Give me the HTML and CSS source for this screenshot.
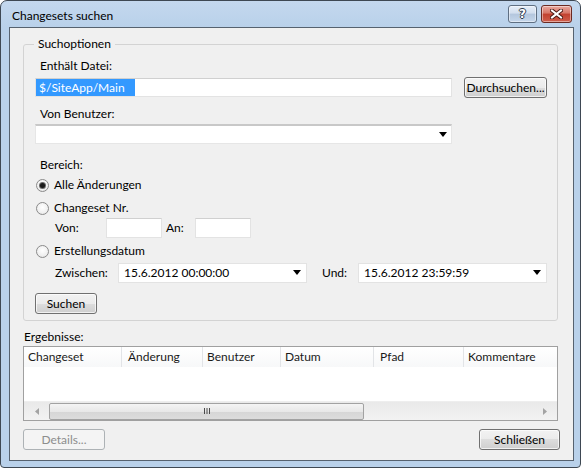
FILE: index.html
```html
<!DOCTYPE html>
<html lang="de">
<head>
<meta charset="utf-8">
<title>Changesets suchen</title>
<link rel="stylesheet" href="styles.css">
</head>
<body>
<div class="window">
  <div class="titlebar">
    <span class="title">Changesets suchen</span>
    <div class="caption-buttons">
      <div class="cbtn help"><span class="q">?</span></div>
      <div class="cbtn close">
        <svg width="13" height="10" viewBox="0 0 13 10">
          <path d="M2 1.5 L11 8.5 M11 1.5 L2 8.5" stroke="#4a1a14" stroke-width="4" stroke-linecap="square"/>
          <path d="M2 1.5 L11 8.5 M11 1.5 L2 8.5" stroke="#ffffff" stroke-width="2" stroke-linecap="square"/>
        </svg>
      </div>
    </div>
  </div>
  <div class="client">
    <div class="group">
      <span class="legend">Suchoptionen</span>
      <div class="label">Enthält Datei:</div>
      <div class="row file-row">
        <div class="textbox wide"><span class="sel">$/SiteApp/Main</span></div>
        <div class="btn browse">Durchsuchen...</div>
      </div>
      <div class="label l2">Von Benutzer:</div>
      <div class="combo wide">
        <span></span>
        <svg class="arrow" width="8" height="5" viewBox="0 0 8 5"><path d="M0 0 H8 L4 5 Z" fill="#000"/></svg>
      </div>
      <div class="label l3">Bereich:</div>
      <div class="radio r1"><span class="dot checked"></span><span>Alle Änderungen</span></div>
      <div class="radio r2"><span class="dot"></span><span>Changeset Nr.</span></div>
      <div class="row sub sub1">
        <span class="sublabel von">Von:</span>
        <div class="textbox small"></div>
        <span class="sublabel an">An:</span>
        <div class="textbox small"></div>
      </div>
      <div class="radio r3"><span class="dot"></span><span>Erstellungsdatum</span></div>
      <div class="row sub sub2">
        <span class="sublabel zw">Zwischen:</span>
        <div class="combo date">
          <span>15.6.2012 00:00:00</span>
          <svg class="arrow" width="8" height="5" viewBox="0 0 8 5"><path d="M0 0 H8 L4 5 Z" fill="#000"/></svg>
        </div>
        <span class="sublabel und">Und:</span>
        <div class="combo date">
          <span>15.6.2012 23:59:59</span>
          <svg class="arrow" width="8" height="5" viewBox="0 0 8 5"><path d="M0 0 H8 L4 5 Z" fill="#000"/></svg>
        </div>
      </div>
      <div class="btn search">Suchen</div>
    </div>
    <div class="results-label">Ergebnisse:</div>
    <div class="listview">
      <div class="lv-header">
        <div class="col c1">Changeset</div>
        <div class="col c2">Änderung</div>
        <div class="col c3">Benutzer</div>
        <div class="col c4">Datum</div>
        <div class="col c5">Pfad</div>
        <div class="col c6">Kommentare</div>
      </div>
      <div class="lv-body"></div>
      <div class="hscroll">
        <div class="sarrow">
          <svg width="4" height="7" viewBox="0 0 4 7"><path d="M4 0 V7 L0 3.5 Z" fill="#a3a3a3"/></svg>
        </div>
        <div class="thumb">
          <svg width="8" height="6" viewBox="0 0 8 6"><path d="M1.5 0 V6 M4 0 V6 M6.5 0 V6" stroke="#4a4a4a" stroke-width="1"/></svg>
        </div>
        <div class="track"></div>
        <div class="sarrow">
          <svg width="4" height="7" viewBox="0 0 4 7"><path d="M0 0 V7 L4 3.5 Z" fill="#a3a3a3"/></svg>
        </div>
      </div>
    </div>
    <div class="footer">
      <div class="btn disabled details">Details...</div>
      <div class="btn close-btn">Schließen</div>
    </div>
  </div>
</div>
</body>
</html>
```

FILE: styles.css
```css
* { box-sizing: border-box; }
html, body { margin: 0; padding: 0; }
body {
  width: 581px;
  height: 468px;
  background: #ffffff;
  font-family: Lato, "Liberation Sans", sans-serif;
  font-size: 12px;
  color: #000;
}

.window {
  width: 581px;
  height: 468px;
  border: 1px solid #3e4853;
  border-radius: 7px 7px 4px 4px;
  background: linear-gradient(#c4d8ee, #b9d1ea 26px);
  display: flex;
  flex-direction: column;
  overflow: hidden;
}

.titlebar {
  height: 26px;
  flex: none;
  display: flex;
  justify-content: space-between;
  align-items: flex-start;
  padding: 0 8px 0 11px;
}
.title { line-height: 16px; margin-top: 7px; }
.caption-buttons { display: flex; gap: 4px; margin-top: 4px; }
.cbtn {
  height: 18px;
  border: 1px solid #5f6f82;
  border-radius: 3px;
  display: flex;
  align-items: center;
  justify-content: center;
  box-shadow: inset 0 0 0 1px rgba(255,255,255,0.45);
}
.help {
  width: 29px;
  background: linear-gradient(#e6eef8 0%, #d2deee 45%, #b3c6dd 50%, #c6d7eb 100%);
}
.q {
  color: #fff;
  font-family: "DejaVu Sans", sans-serif;
  font-weight: bold;
  font-size: 12px;
  line-height: 14px;
  text-shadow: 1px 0 0 #2c3a4c, -1px 0 0 #2c3a4c, 0 1px 0 #2c3a4c, 0 -1px 0 #2c3a4c;
}
.close {
  width: 31px;
  border-color: #6b2a22;
  background: linear-gradient(#e9a99f 0%, #d77566 45%, #c2412f 50%, #cf5e4c 100%);
}

.client {
  flex: 1;
  margin: 0 6px 6px 8px;
  border: 1px solid #56626f;
  background: #f0f0f0;
  display: flex;
  flex-direction: column;
}

.group {
  position: relative;
  margin: 16px 15px 0 13px;
  border: 1px solid #d3d3d3;
  border-radius: 3px;
  padding: 13px 11px 6px;
  display: flex;
  flex-direction: column;
  align-items: flex-start;
}
.legend {
  position: absolute;
  top: -9px;
  left: 10px;
  padding: 0 4px;
  background: #f0f0f0;
  line-height: 16px;
}
.label { line-height: 16px; margin-left: 5px; }
.l2 { margin-top: 8px; }
.l3 { margin-top: 13px; }

.row { display: flex; align-items: center; }
.file-row { margin-top: 3px; height: 21px; }

.textbox {
  height: 19px;
  background: #fff;
  border: 1px solid #e3e3e3;
  border-top-color: #d0d0d0;
}
.wide { width: 417px; }
.sel {
  display: block;
  width: 99px;
  height: 17px;
  line-height: 17px;
  padding-left: 3px;
  background: #3399ff;
  color: #fff;
}

.btn {
  height: 21px;
  border: 1px solid #707070;
  border-radius: 3px;
  background: linear-gradient(#f2f2f2 0%, #ebebeb 50%, #dddddd 50%, #cfcfcf 100%);
  box-shadow: inset 0 0 0 1px rgba(255,255,255,0.7);
  display: flex;
  align-items: center;
  justify-content: center;
  line-height: 16px;
}
.browse { width: 83px; margin-left: 12px; }
.search { width: 62px; margin-top: 10px; }

.combo {
  height: 20px;
  margin-top: 2px;
  background: #fff;
  border: 1px solid #e6e6e6;
  border-top: 2px solid #c8c8c8;
  display: flex;
  align-items: center;
  justify-content: space-between;
  padding: 0 4px 0 5px;
  line-height: 16px;
}
.combo .arrow { flex: none; }

.radio {
  display: flex;
  align-items: center;
  gap: 5px;
  height: 16px;
  line-height: 16px;
  margin-left: 1px;
}
.r1 { margin-top: 4px; }
.r2 { margin-top: 7px; }
.r3 { margin-top: 5px; }
.dot {
  width: 13px;
  height: 13px;
  border-radius: 50%;
  border: 1px solid #8a8a8a;
  background: radial-gradient(circle at 50% 40%, #ffffff 0%, #f0f0f0 60%, #dcdcdc 100%);
  display: flex;
  align-items: center;
  justify-content: center;
  flex: none;
}
.dot.checked::after {
  content: "";
  width: 5px;
  height: 5px;
  border-radius: 50%;
  background: #1a1a1a;
  box-shadow: 0 0 0 1px #6a6a6a;
}

.sub { margin-left: 20px; }
.sub1 { margin-top: 2px; height: 20px; }
.sub2 { margin-top: 3px; height: 21px; }
.sublabel { line-height: 16px; }
.von { width: 51px; }
.an { width: 29px; margin-left: 4px; }
.small { width: 56px; height: 20px; }
.zw { width: 63px; }
.und { width: 36px; margin-left: 15px; }
.combo.date {
  width: 189px;
  height: 20px;
  margin-top: 0;
  border-top-width: 1px;
  border-color: #e3e3e3;
  padding-right: 5px;
}

.results-label { margin: 8px 0 0 14px; line-height: 16px; }

.listview {
  margin: 1px 15px 0 13px;
  height: 75px;
  border: 1px solid #a0a0a0;
  background: #fff;
  display: flex;
  flex-direction: column;
}
.lv-header {
  height: 20px;
  display: flex;
  flex: none;
  background: linear-gradient(#ffffff, #f7f8f9);
}
.col {
  line-height: 20px;
  padding-left: 4px;
  border-right: 1px solid #e2e4e7;
  color: #1a1a1a;
  white-space: nowrap;
}
.c1 { width: 98px; }
.c2 { width: 81px; padding-left: 6px; }
.c3 { width: 78px; }
.c4 { width: 93px; }
.c5 { width: 90px; padding-left: 6px; }
.c6 { flex: 1; border-right: none; }
.lv-body { flex: 1; }
.hscroll {
  height: 19px;
  flex: none;
  display: flex;
  align-items: center;
  background: linear-gradient(#e9e9e9, #f2f2f2);
  border-top: 1px solid #eeeeee;
}
.sarrow {
  width: 25px;
  height: 17px;
  display: flex;
  align-items: center;
  justify-content: center;
  flex: none;
}
.thumb {
  width: 315px;
  height: 17px;
  border: 1px solid #a2a2a2;
  border-radius: 2px;
  background: linear-gradient(#f4f4f4 0%, #e8e8e8 50%, #d6d6d6 51%, #dcdcdc 100%);
  display: flex;
  align-items: center;
  justify-content: center;
}
.track { flex: 1; }

.footer {
  margin-top: 8px;
  display: flex;
  justify-content: space-between;
  padding: 0 13px;
}
.details { width: 82px; }
.close-btn { width: 81px; }
.btn.disabled {
  border-color: #adb2b5;
  background: #f4f4f4;
  color: #8d8d8d;
  box-shadow: none;
}
```
